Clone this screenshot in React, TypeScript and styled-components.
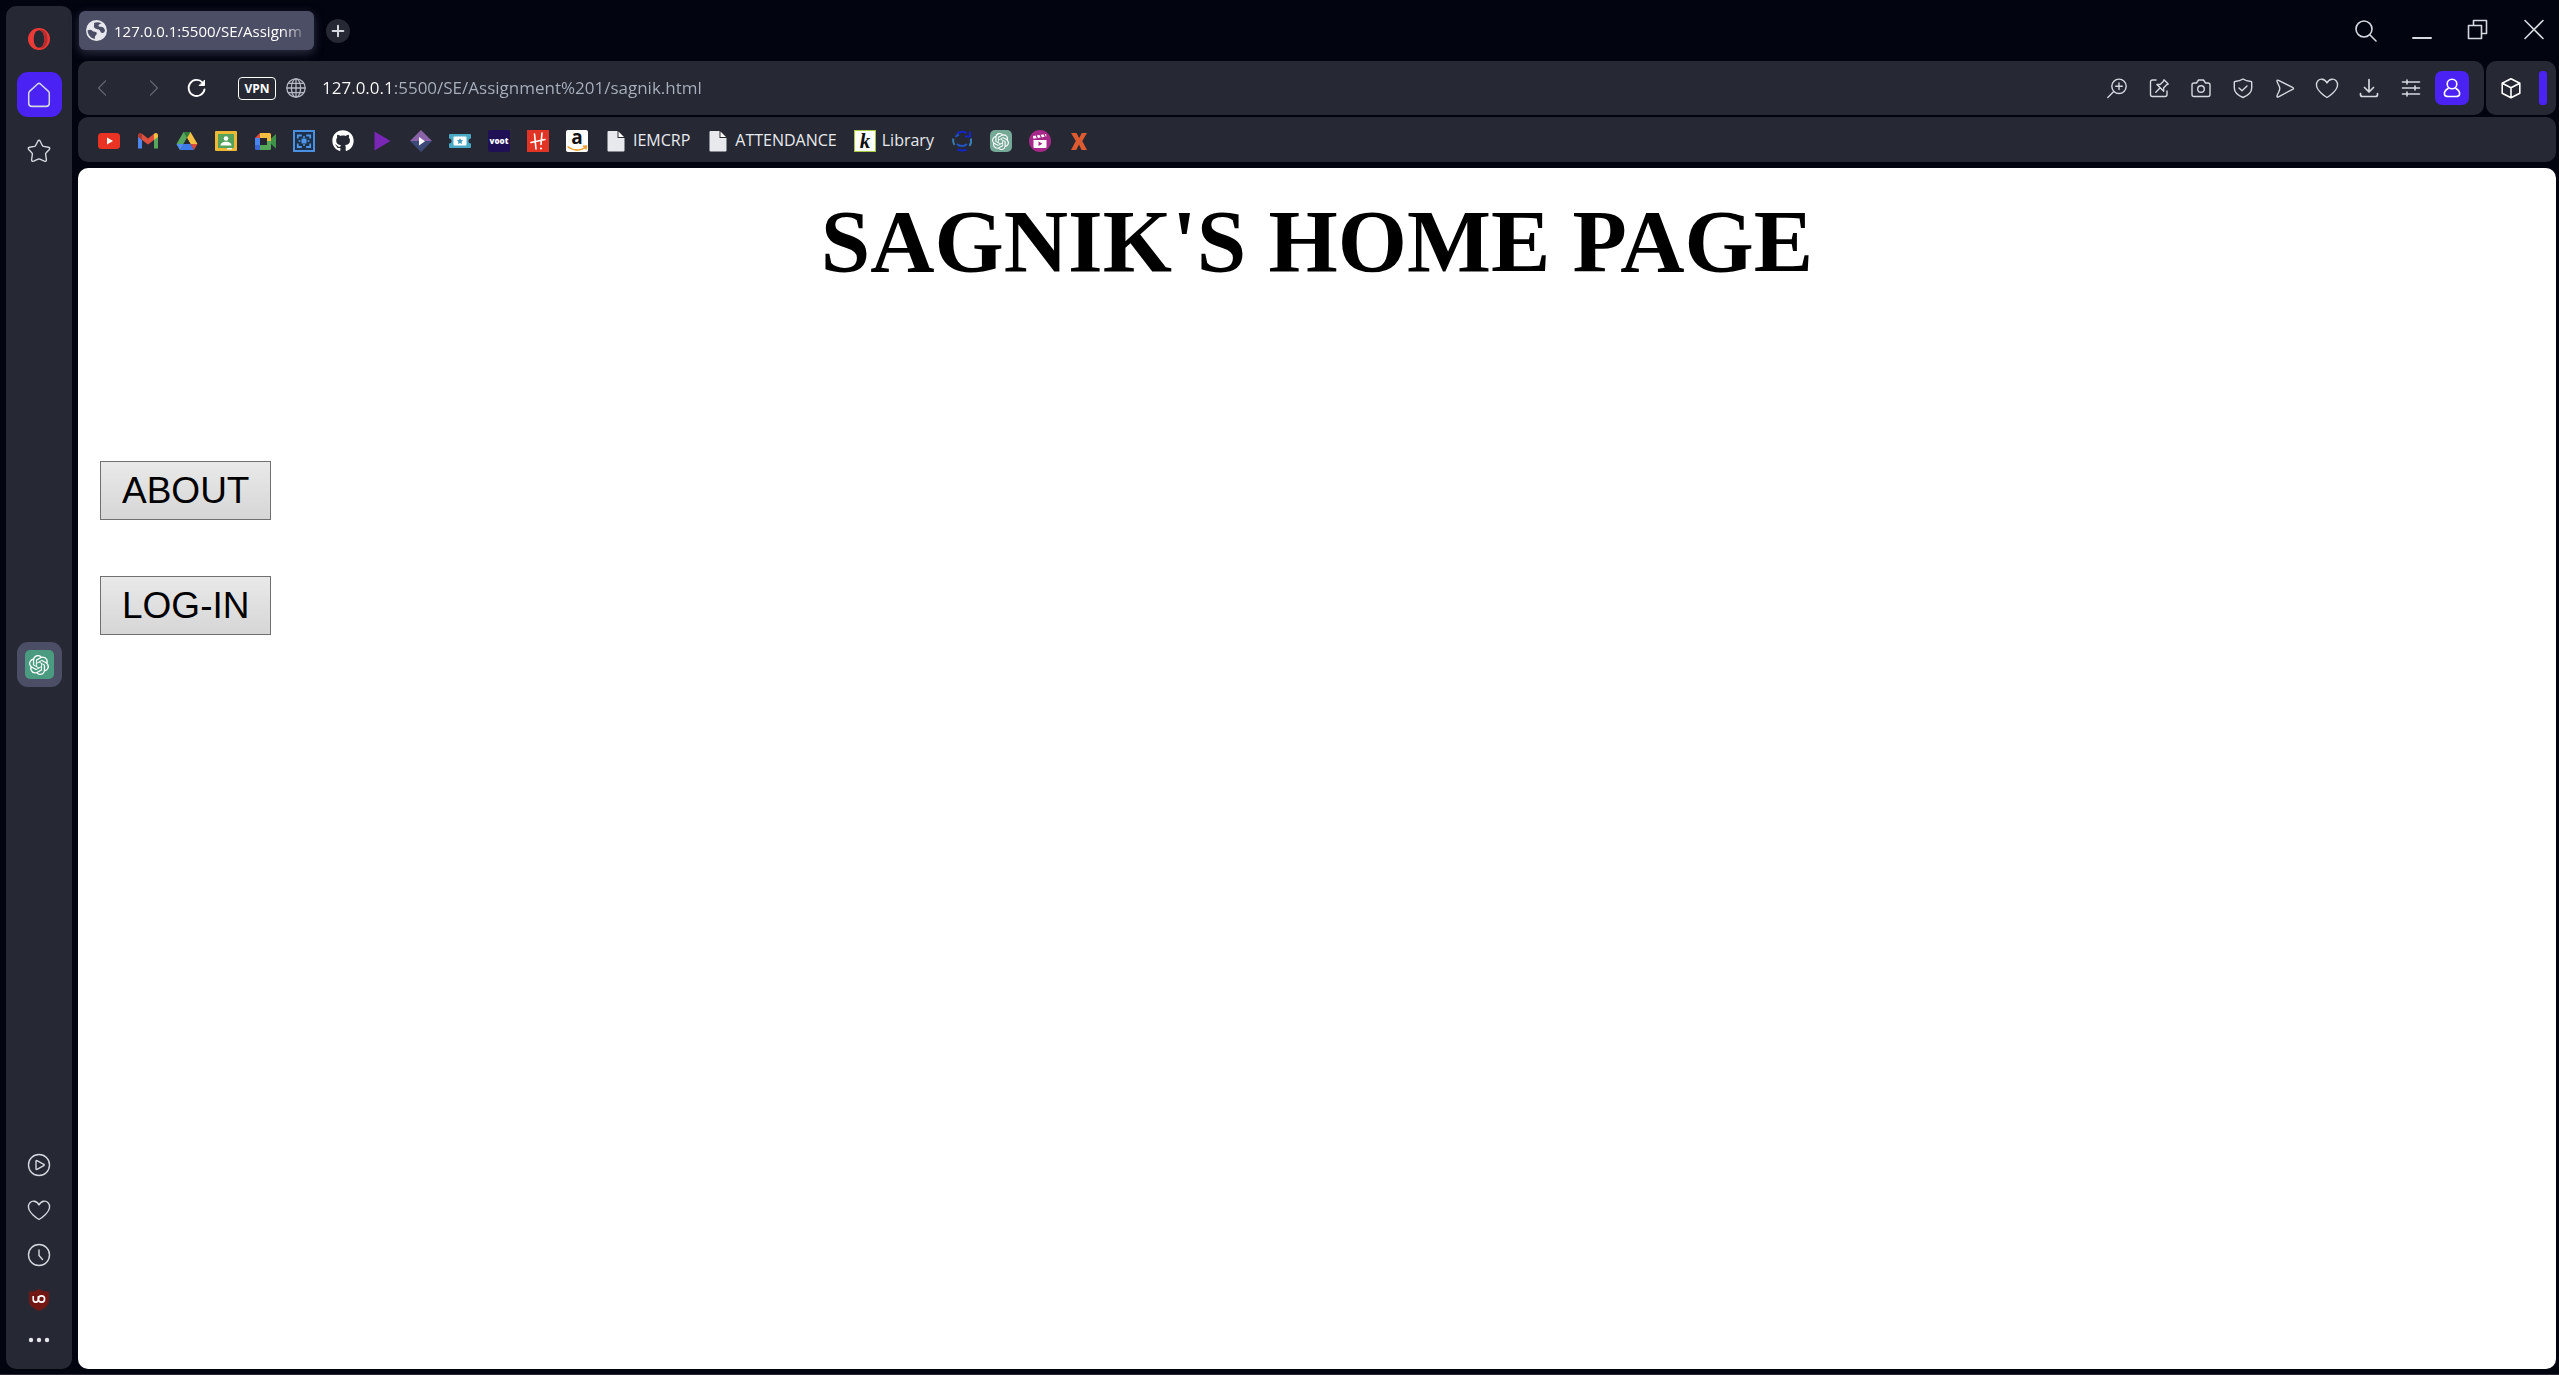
import React from "react";
import styled, { createGlobalStyle, css } from "styled-components";
import { FaGithub } from "react-icons/fa";
import { SiOpenai } from "react-icons/si";

const color = {
  frame: "#020410",
  panel: "#262834",
  active: "#4b4e65",
  accent: "#4a22f4",
  text: "#ffffff",
  muted: "#a9b1bf",
  icon: "#d5d8de",
};

const uiFont = '"Open Sans", "Noto Sans", sans-serif';

const GlobalStyle = createGlobalStyle`
  *, *::before, *::after { box-sizing: border-box; }
  body { margin: 0; background: ${color.frame}; }
  button, input { font: inherit; color: inherit; }
  svg { display: block; }
`;

const Frame = styled.div`
  display: flex;
  gap: 6px;
  height: 100vh;
  padding: 6px 3px 5px 6px;
  background: ${color.frame};
  border-bottom: 1px solid #2c2933;
  font-family: ${uiFont};
  color: ${color.text};
`;

const Sidebar = styled.aside`
  flex: none;
  width: 66px;
  padding: 10px 0 16px;
  display: flex;
  flex-direction: column;
  align-items: center;
  justify-content: space-between;
  background: ${color.panel};
  border-radius: 10px;
`;

const SideGroup = styled.div<{ $gap: number; $after?: number }>`
  display: flex;
  flex-direction: column;
  align-items: center;
  gap: ${(p) => p.$gap}px;
  padding-bottom: ${(p) => p.$after ?? 0}px;
`;

const plainButton = css`
  display: flex;
  align-items: center;
  justify-content: center;
  padding: 0;
  border: 0;
  background: none;
  color: ${color.icon};
  cursor: pointer;
`;

const SideButton = styled.button<{ $fill?: string; $height?: number }>`
  ${plainButton}
  width: 45px;
  height: ${(p) => p.$height ?? 45}px;
  border-radius: 11px;
  background: ${(p) => p.$fill ?? "transparent"};
`;

const GptTile = styled.span<{ $size: number; $fill: string }>`
  display: flex;
  align-items: center;
  justify-content: center;
  width: ${(p) => p.$size}px;
  height: ${(p) => p.$size}px;
  border-radius: 5px;
  background: ${(p) => p.$fill};
  color: #ffffff;
`;

const Main = styled.div`
  flex: 1;
  min-width: 0;
  display: flex;
  flex-direction: column;
`;

const TabStrip = styled.header`
  flex: none;
  display: flex;
  align-items: center;
  height: 55px;
  padding: 0 10px 6px 1px;
`;

const Tab = styled.button`
  display: flex;
  align-items: center;
  gap: 7px;
  width: 235px;
  height: 39px;
  padding: 0 6px 0 7px;
  border: 0;
  border-radius: 6px;
  background: ${color.active};
  box-shadow: 0 3px 10px rgba(75, 78, 101, 0.6);
  font-size: 15px;
  text-align: left;
`;

const TabTitle = styled.span`
  flex: 1;
  white-space: nowrap;
  mask-image: linear-gradient(to right, #000 168px, transparent 196px);
`;

const NewTab = styled.button`
  ${plainButton}
  width: 24px;
  height: 24px;
  margin-left: 12px;
  border-radius: 50%;
  background: ${color.panel};
`;

const WindowControls = styled.div`
  display: flex;
  gap: 32px;
  margin-left: auto;
  padding-bottom: 2px;
`;

const IconButton = styled.button<{ $tone?: string }>`
  ${plainButton}
  width: 24px;
  height: 24px;
  color: ${(p) => p.$tone ?? color.icon};
`;

const ToolRow = styled.div`
  flex: none;
  display: flex;
  gap: 2px;
  height: 54px;
`;

const AddressBar = styled.div`
  flex: 1;
  display: flex;
  align-items: center;
  padding: 0 15px 0 12px;
  background: ${color.panel};
  border-radius: 10px;
`;

const NavButtons = styled.div`
  display: flex;
  align-items: center;
  gap: 23px;
`;

const VpnButton = styled.button`
  ${plainButton}
  width: 38px;
  height: 23px;
  margin: 0 8px 0 30px;
  border: 1px solid #ffffff;
  border-radius: 4px;
  color: #ffffff;
  font-size: 12px;
  font-weight: 700;
`;

const UrlInput = styled.input`
  flex: 1;
  min-width: 0;
  margin-left: 14px;
  padding: 0;
  border: 0;
  outline: 0;
  color: ${color.muted};
  font-size: 17px;
  line-height: 24px;
  background: linear-gradient(to right, ${color.text} 72px, ${color.muted} 72px);
  background-clip: text;
  -webkit-background-clip: text;
  -webkit-text-fill-color: transparent;
`;

const Tools = styled.div`
  display: flex;
  align-items: center;
  gap: 18px;
`;

const ProfileButton = styled.button`
  ${plainButton}
  width: 34px;
  height: 34px;
  margin-left: -6px;
  border-radius: 7px;
  background: ${color.accent};
  color: #ffffff;
`;

const ExtensionBar = styled.div`
  display: flex;
  align-items: center;
  justify-content: space-between;
  width: 70px;
  padding: 0 9px 0 13px;
  background: ${color.panel};
  border-radius: 10px;
`;

const AccentPill = styled.span`
  width: 8px;
  height: 34px;
  border-radius: 3px;
  background: ${color.accent};
`;

const Bookmarks = styled.nav`
  flex: none;
  display: flex;
  align-items: center;
  gap: 17px;
  height: 45px;
  margin: 2px 0 6px;
  padding: 3px 20px 0;
  background: ${color.panel};
  border-radius: 10px;
`;

const Bookmark = styled.a`
  display: flex;
  align-items: center;
  gap: 6px;
  color: #e8eaee;
  font-size: 16px;
  line-height: 22px;
  text-decoration: none;
  white-space: nowrap;
`;

const BookmarkLabel = styled.span`
  padding-bottom: 2px;
`;

const Page = styled.main`
  flex: 1;
  padding: 21px 22px;
  background: #ffffff;
  border-radius: 10px;
  color: #000000;
`;

const Title = styled.h1`
  margin: 0 0 168px;
  font-family: "Liberation Serif", "Times New Roman", serif;
  font-size: 89px;
  font-weight: 700;
  line-height: 104px;
  text-align: center;
`;

const Actions = styled.div`
  display: flex;
  flex-direction: column;
  align-items: flex-start;
  gap: 56px;
`;

const PageButton = styled.button`
  height: 59px;
  padding: 0 21px;
  border: 1px solid #707070;
  background: linear-gradient(#e9e9e9, #d6d6d6);
  color: #000000;
  font-family: "Liberation Sans", Arial, sans-serif;
  font-size: 37px;
  line-height: 42px;
`;

type SvgProps = { children: React.ReactNode; size?: number; width?: number };

/* Outline icon on a 24-unit grid. */
const Line = ({ children, size = 24, width = 1.4 }: SvgProps) => (
  <svg width={size} height={size} viewBox="0 0 24 24" fill="none" stroke="currentColor"
    strokeWidth={width} strokeLinecap="round" strokeLinejoin="round" aria-hidden="true">
    {children}
  </svg>
);

/* Full-colour favicon on a 22-unit grid. */
const Favicon = ({ children }: SvgProps) => (
  <svg width={22} height={22} viewBox="0 0 22 22" aria-hidden="true">
    {children}
  </svg>
);

const HeartIcon = () => (
  <Line>
    <path d="M12 21.500C9.500 20.200 2.200 14.800 1.500 9.500 1 5.500 4 2.900 7 3.200c2.400.2 4.100 1.800 5 3.700.9-1.900 2.600-3.500 5-3.700 3-.3 6 2.300 5.500 6.300-.7 5.300-8 10.700-10.500 12z" />
  </Line>
);

const DocIcon = () => (
  <Favicon>
    <path d="M3.500 1h9v7h7v12.500a1 1 0 0 1-1 1h-15a1 1 0 0 1-1-1V2a1 1 0 0 1 1-1z" fill="#e8e9ec" />
    <path d="M13.500 1.500l5.500 5.500h-5.500z" fill="#ffffff" />
  </Favicon>
);

const YoutubeIcon = () => (
  <Favicon>
    <rect y="3" width="22" height="16" rx="3.500" fill="#ea3323" />
    <path d="M9 7.500l6 3.500-6 3.500z" fill="#fff" />
  </Favicon>
);

const GmailIcon = () => (
  <Favicon>
    <path d="M1 5v13.500h4V10z" fill="#4f86ec" />
    <path d="M21 5v13.500h-4V10z" fill="#57a65b" />
    <path d="M1 5.200C1 3 3.500 2.500 5 3.700V10L1 7z" fill="#b03a2e" />
    <path d="M21 5.200C21 3 18.500 2.500 17 3.700V10l4-3z" fill="#f2bf42" />
    <path d="M5 3.700l6 4.800 6-4.800V10l-6 4.500L5 10z" fill="#dd4f3f" />
  </Favicon>
);

const DriveIcon = () => (
  <Favicon>
    <path d="M7.500 2h7L11 8 4 20 .5 14z" fill="#57a65b" />
    <path d="M7.500 2h7l-3.500 6z" fill="#2f7d3b" />
    <path d="M14.500 2L21.500 14h-7L11 8z" fill="#f5bf41" />
    <path d="M7.500 14h7l3.500 6H4z" fill="#3f7be8" />
    <path d="M.5 14h7L4 20z" fill="#4f8cf5" />
    <path d="M11 8l3.500 6h-7z" fill={color.panel} />
    <path d="M14.500 14h7L18 20z" fill="#dc4b3d" />
  </Favicon>
);

const ClassroomIcon = () => (
  <Favicon>
    <rect y="1" width="22" height="20" rx="1" fill="#edb934" />
    <rect x="3" y="4" width="16" height="14" fill="#56a25b" />
    <circle cx="11" cy="8.500" r="2.300" fill="#fff" />
    <path d="M5.500 15.500c0-2.500 2.800-3.700 5.500-3.700s5.500 1.200 5.500 3.700z" fill="#fff" />
    <path d="M12 18h5v1.500h-5z" fill="#f5f5f5" />
  </Favicon>
);

const MeetIcon = () => (
  <Favicon>
    <path d="M1 8l5-5v5z" fill="#dc4b3d" />
    <path d="M6 3h9.500a1.500 1.500 0 0 1 1.500 1.500V11h-4V8H6z" fill="#f5bf41" />
    <path d="M1 8h5v7H1z" fill="#4a86f0" />
    <path d="M1 15h5v5H2.500A1.500 1.500 0 0 1 1 18.500z" fill="#3a66d6" />
    <path d="M6 15h7v-4h4v7.500a1.500 1.500 0 0 1-1.500 1.500H6z" fill="#55a85a" />
    <path d="M17 8.500L22 4v14.500l-5-4.500z" fill="#3d9148" />
  </Favicon>
);

const CaptureIcon = () => (
  <Favicon>
    <rect x="1" y="1" width="20" height="20" fill="#1f3049" stroke="#4a90e2" strokeWidth="2" />
    <path d="M4.800 8.500V5.500h4M13.200 5.500h4v3M17.200 13.500v3.500h-4M8.800 17h-4v-3.500" fill="none" stroke="#4f96ea" strokeWidth="1.800" />
    <rect x="8.500" y="8.500" width="5" height="5" fill="#4f96ea" />
    <path d="M11 6v2M11 14v2M5.500 11h2M14.500 11h2" stroke="#4f96ea" strokeWidth="1.500" />
  </Favicon>
);

const PlayIcon = () => (
  <Favicon>
    <path d="M3.500 1.500L19.500 11l-16 9.500z" fill="#7a27b8" />
  </Favicon>
);

const DiamondIcon = () => (
  <Favicon>
    <path d="M11 0L22 11H0z" fill="#8a63a8" />
    <path d="M0 11h22L11 22z" fill="#3d4a78" />
    <path d="M9 7l6 4.200-6 4.300z" fill="#fff" />
  </Favicon>
);

const TicketIcon = () => (
  <Favicon>
    <path d="M1 4h20a1 1 0 0 1 1 1v3.500a2.500 2.500 0 0 0 0 5V17a1 1 0 0 1-1 1H1a1 1 0 0 1-1-1v-3.500a2.500 2.500 0 0 0 0-5V5a1 1 0 0 1 1-1z" fill="#4aa9c4" />
    <rect x="4.500" y="6.500" width="13" height="9" rx="1" fill="#fff" />
    <path d="M11 8l1 1.900 2.200.4-1.600 1.500.4 2.200-2-1-2 1 .4-2.200-1.600-1.500 2.200-.4z" fill="#3a9ab8" />
  </Favicon>
);

const VootIcon = () => (
  <Favicon>
    <rect width="22" height="22" rx="2" fill="#1f0f55" />
    <text x="11" y="14" textAnchor="middle" fontFamily="Open Sans, sans-serif" fontWeight="800" fontSize="8" fill="#fff">voot</text>
  </Favicon>
);

const RedIcon = () => (
  <Favicon>
    <rect width="22" height="22" fill="#e23424" />
    <path d="M7.500 4l1.500 15M15 3l-1 11.500M4 12.500l14-3" stroke="#fff" strokeWidth="1.600" strokeLinecap="round" />
    <circle cx="14" cy="18.500" r="1.100" fill="#fff" />
  </Favicon>
);

const AmazonIcon = () => (
  <Favicon>
    <rect width="22" height="22" rx="2" fill="#fff" />
    <text x="11" y="14" textAnchor="middle" fontFamily="Open Sans, sans-serif" fontWeight="700" fontSize="19" fill="#111">a</text>
    <path d="M1.500 16.500c6 4.500 12.500 4.500 18 .8M17 16.200l3.500-.2-.7 3.500" fill="none" stroke="#f0a030" strokeWidth="1.500" />
  </Favicon>
);

const LibraryIcon = () => (
  <Favicon>
    <rect x=".5" y=".5" width="21" height="21" fill="#fff" stroke="#a5c93c" />
    <text x="11" y="18" textAnchor="middle" fontFamily="Liberation Serif, serif" fontStyle="italic" fontWeight="700" fontSize="21" fill="#111">k</text>
  </Favicon>
);

const RingIcon = () => (
  <Favicon>
    <g fill="none" strokeWidth="2">
      <path d="M6 3.500A9 9 0 0 1 15.500 3M19 1.500v5h-5M15.500 19.300a9 9 0 0 1-9 0" stroke="#1426c8" />
      <path d="M2.200 8.500a9 9 0 0 0 1.300 6.500M19.800 8.500A9 9 0 0 1 18.500 16" stroke="#3a7db0" />
      <path d="M4.500 7A7 7 0 0 1 8 4.500M6 14c2.500 2.800 7.500 2.800 10 0" stroke="#2155c5" />
    </g>
  </Favicon>
);

const MovieIcon = () => (
  <Favicon>
    <circle cx="11" cy="11" r="11" fill="#a8288a" />
    <path d="M4.500 10h13v7a1 1 0 0 1-1 1h-11a1 1 0 0 1-1-1zM4 6l13-2 .4 2.500-13 2.200z" fill="#fff" />
    <path d="M7 5l1.500 3.500M11 4.500L12.500 8M15 4l1.500 3.300" stroke="#a8288a" strokeWidth="1.200" />
    <path d="M9.500 11.500l4 2.300-4 2.300z" fill="#a8288a" />
  </Favicon>
);

const XIcon = () => (
  <Favicon>
    <path d="M3 3h5.500l2.700 5 2.500-5H19l-4.700 8L19 20h-5.500L11 14.500 8.300 20H3l4.800-9z" fill="#dc5b30" />
  </Favicon>
);

const bookmarks: { name: string; icon: React.ReactNode; label?: string }[] = [
  { name: "YouTube", icon: <YoutubeIcon /> },
  { name: "Gmail", icon: <GmailIcon /> },
  { name: "Drive", icon: <DriveIcon /> },
  { name: "Classroom", icon: <ClassroomIcon /> },
  { name: "Meet", icon: <MeetIcon /> },
  { name: "Capture", icon: <CaptureIcon /> },
  { name: "GitHub", icon: <FaGithub size={22} color="#fff" /> },
  { name: "Player", icon: <PlayIcon /> },
  { name: "Movies", icon: <DiamondIcon /> },
  { name: "Tickets", icon: <TicketIcon /> },
  { name: "Voot", icon: <VootIcon /> },
  { name: "Streaming", icon: <RedIcon /> },
  { name: "Amazon", icon: <AmazonIcon /> },
  { name: "IEMCRP", icon: <DocIcon />, label: "IEMCRP" },
  { name: "ATTENDANCE", icon: <DocIcon />, label: "ATTENDANCE" },
  { name: "Library", icon: <LibraryIcon />, label: "Library" },
  { name: "Converter", icon: <RingIcon /> },
  { name: "ChatGPT", icon: <GptTile $size={22} $fill="#75a896"><SiOpenai size={17} /></GptTile> },
  { name: "Films", icon: <MovieIcon /> },
  { name: "X", icon: <XIcon /> },
];

const tools: { name: string; icon: React.ReactNode }[] = [
  { name: "Zoom", icon: <Line><circle cx="14" cy="10.300" r="7.200" /><path d="M8.700 15.500L2.800 21.400M10.700 10.300h6.600M14 7v6.600" /></Line> },
  { name: "Easy setup", icon: <Line><path d="M9 4H5.500A2 2 0 0 0 3.500 6v12.500a2 2 0 0 0 2 2H18a2 2 0 0 0 2-2V15" /><path d="M17 3.800l4.200 4.200-1.600.8-3 3.200.1 3.200-6.800-6.800 3.200.1 3.200-3zM13.200 11.800L8.800 16.200" /></Line> },
  { name: "Snapshot", icon: <Line><path d="M5 7h2.500l2-3h5l2 3H19a2 2 0 0 1 2 2v9.500a2 2 0 0 1-2 2H5a2 2 0 0 1-2-2V9a2 2 0 0 1 2-2z" /><circle cx="12" cy="13" r="3.300" /></Line> },
  { name: "Privacy protection", icon: <Line><path d="M12 3c2.500 1.700 5 2.200 8 2.500.8 0 .7 1 .7 1.500v5c0 4-3.200 7.200-8.700 9.500-5.500-2.300-8.700-5.500-8.700-9.500V7c0-.5-.1-1.500.7-1.500 3-.3 5.500-.8 8-2.500z" /><path d="M8 12l3 2.800 5-4.800" /></Line> },
  { name: "Send", icon: <Line><path d="M5.500 4.300L20 11.700q1 .7 0 1.400L5.500 20.800q-2 .8-1.400-1.200c.7-2.500 2.700-4.500 2.700-7s-2-4.500-2.700-7q-.6-2 1.400-1.300z" /></Line> },
  { name: "Favorites", icon: <HeartIcon /> },
  { name: "Downloads", icon: <Line width={1.700}><path d="M12 3.500v12M7.500 11.500l4.500 4.500 4.500-4.500M3.500 17.500v1a2 2 0 0 0 2 2h13a2 2 0 0 0 2-2v-1" /></Line> },
  { name: "Page settings", icon: <Line width={1.600}><path d="M3.500 6h17M3.500 12h17M3.500 18h17M8 4v4M16 10v4M8 16v4" /></Line> },
];

export default function App() {
  return (
    <>
      <GlobalStyle />
      <Frame>
        <Sidebar>
          <SideGroup $gap={11} $after={9}>
            <SideButton aria-label="Opera">
              <svg width="24" height="24" viewBox="0 0 24 24" aria-hidden="true">
                <path fillRule="evenodd" fill="#ea3b36" d="M12 1a11 11 0 1 0 0 22 11 11 0 0 0 0-22zM12 3.200c3.300 0 5.200 4 5.200 8.800s-1.900 8.800-5.200 8.800S6.800 16.800 6.800 12 8.700 3.200 12 3.200z" />
                <path d="M12 3.200c3.300 0 5.200 4 5.200 8.800s-1.900 8.800-5.200 8.800c5 2 8.500-3 8.500-8.800S17 1.200 12 3.200z" fill="#b52c2f" />
              </svg>
            </SideButton>
            <SideButton aria-label="Home" $fill={color.accent}>
              <Line size={26}><path d="M2.500 10.500q0-1.200 1-2.100L10.700 1.800q1.300-1.100 2.600 0l7.200 6.600q1 .9 1 2.100V19.500a3 3 0 0 1-3 3h-13a3 3 0 0 1-3-3z" /></Line>
            </SideButton>
            <SideButton aria-label="Bookmarks">
              <Line><path d="M10.800 2.200q1.200-2 2.400 0l2.300 4.500q.3.600 1 .7l5 .8q2 .5.8 2.200l-3.300 3.500q-.5.500-.4 1.200l.8 5.500q.1 2.200-2 1.600l-4.600-2q-.8-.3-1.600 0l-4.600 2q-2.100.6-2-1.600l.8-5.500q.1-.7-.4-1.200L1.700 10.400q-1.200-1.700.8-2.200l5-.8q.7-.1 1-.7z" /></Line>
            </SideButton>
          </SideGroup>
          <SideButton aria-label="ChatGPT" $fill={color.active}>
            <GptTile $size={29} $fill="#4a9b80"><SiOpenai size={20} /></GptTile>
          </SideButton>
          <SideGroup $gap={9}>
            <SideButton $height={36} aria-label="Player">
              <Line><circle cx="12" cy="12" r="10.500" /><path d="M9 8.200q0-1 1-.6l6.800 3.700q.9.700 0 1.400L10 16.400q-1 .4-1-.6z" /></Line>
            </SideButton>
            <SideButton $height={36} aria-label="Pinboards"><HeartIcon /></SideButton>
            <SideButton $height={36} aria-label="History">
              <Line><circle cx="12" cy="12" r="10.500" /><path d="M12 7v5.500l3.500 4" /></Line>
            </SideButton>
            <SideButton $height={36} aria-label="Ad blocker">
              <svg width="22" height="24" viewBox="0 0 22 24" aria-hidden="true">
                <path d="M11 1c3 2 6 2.500 10 2.800V13c0 4.500-4.500 7.500-10 10-5.500-2.500-10-5.500-10-10V3.800C5 3.500 8 3 11 1z" fill="#721714" stroke="#4a2426" />
                <path d="M5.200 8v3.500a2.600 2.600 0 0 0 5.200 0V8" fill="none" stroke="#fff" strokeWidth="1.600" />
                <circle cx="13.500" cy="11" r="3.100" fill="none" stroke="#fff" strokeWidth="1.600" />
              </svg>
            </SideButton>
            <SideButton $height={26} aria-label="More">
              <svg width="24" height="6" viewBox="0 0 24 6" fill="#e4e6eb" aria-hidden="true">
                <circle cx="4" cy="3" r="2.200" /><circle cx="12" cy="3" r="2.200" /><circle cx="20" cy="3" r="2.200" />
              </svg>
            </SideButton>
          </SideGroup>
        </Sidebar>

        <Main>
          <TabStrip>
            <Tab>
              <svg width="21" height="21" viewBox="0 0 21 21" aria-hidden="true">
                <circle cx="10.500" cy="10.500" r="10.500" fill="#e6e8ee" />
                <path d="M1.500 10.500c2-1 4-.8 5 .5 1 1 3.500.3 4.200 1.800.6 1.700-1 2.200-1.700 3.700-.3.800-.2 1.500 0 2.500-4.500-.7-7-4.200-7.500-8.500zM8 3c2.500-1.300 5-1 7.500.3-1.500.5-3 1.200-3 2.400.3 1.200 2.200.8 3.700 1.300 1.500.3 2.300 1.800 2.800 3.300-.5 2.500-2 3.200-3.500 2.500-1.500-.8-1-2.600-2.700-3.200C11 9 9 9 8.200 7.600 7.500 6.300 8.500 4.500 8 3z" fill={color.active} />
              </svg>
              <TabTitle>127.0.0.1:5500/SE/Assignm</TabTitle>
            </Tab>
            <NewTab aria-label="New tab">
              <Line size={16} width={3}><path d="M12 4v16M4 12h16" /></Line>
            </NewTab>
            <WindowControls>
              <IconButton aria-label="Search tabs">
                <Line width={1.600}><circle cx="10" cy="11" r="8" /><path d="M16 17l6 6" /></Line>
              </IconButton>
              <IconButton aria-label="Minimize">
                <Line width={2}><path d="M3 20h18" /></Line>
              </IconButton>
              <IconButton aria-label="Restore">
                <Line width={1.600}><path d="M2.500 7.500h13v13h-13zM7.500 7.500v-5h13v13h-5" /></Line>
              </IconButton>
              <IconButton aria-label="Close">
                <Line width={1.600}><path d="M3 2.500l18 18M21 2.500l-18 18" /></Line>
              </IconButton>
            </WindowControls>
          </TabStrip>

          <ToolRow>
            <AddressBar>
              <NavButtons>
                <IconButton aria-label="Back" $tone="#60626d"><Line><path d="M15.500 5L8.500 12l7 7" /></Line></IconButton>
                <IconButton aria-label="Forward" $tone="#60626d"><Line><path d="M13.500 5l7 7-7 7" /></Line></IconButton>
                <IconButton aria-label="Reload" $tone="#ffffff">
                  <Line width={1.800}><path d="M20.500 13.500A8 8 0 1 1 18.500 6.500" /><path d="M20.500 4.500v5h-5z" fill="currentColor" strokeWidth="1" /></Line>
                </IconButton>
              </NavButtons>
              <VpnButton>VPN</VpnButton>
              <IconButton aria-label="Site information" $tone="#b4b9c4">
                <Line size={22}><circle cx="12" cy="12" r="10" /><ellipse cx="12" cy="12" rx="5" ry="10" /><path d="M12 2v20M2 12h20M3.500 7h17M3.500 17h17" /></Line>
              </IconButton>
              <UrlInput aria-label="Address" defaultValue="127.0.0.1:5500/SE/Assignment%201/sagnik.html" />
              <Tools>
                {tools.map((t) => (
                  <IconButton key={t.name} aria-label={t.name}>{t.icon}</IconButton>
                ))}
                <ProfileButton aria-label="Profile">
                  <Line width={1.600}><circle cx="12" cy="8" r="4.800" /><path d="M8 12.500C5 14.500 4 16.500 4.500 18.500 5 20.300 6.500 20.500 8 20.500h8c1.500 0 3-.2 3.500-2 .5-2-.5-4-3.500-6" /></Line>
                </ProfileButton>
              </Tools>
            </AddressBar>
            <ExtensionBar>
              <IconButton aria-label="Extensions" $tone="#ffffff">
                <Line width={1.600}><path d="M12 2.800l8.800 4.400v10L12 21.800l-8.800-4.600v-10zM3.200 7.200L12 11.800l8.800-4.600M12 11.800v10" /></Line>
              </IconButton>
              <AccentPill />
            </ExtensionBar>
          </ToolRow>

          <Bookmarks aria-label="Bookmarks">
            {bookmarks.map((b) => (
              <Bookmark key={b.name} href="#" aria-label={b.name}>
                {b.icon}
                {b.label && <BookmarkLabel>{b.label}</BookmarkLabel>}
              </Bookmark>
            ))}
          </Bookmarks>

          <Page>
            <Title>SAGNIK'S HOME PAGE</Title>
            <Actions>
              <PageButton>ABOUT</PageButton>
              <PageButton>LOG-IN</PageButton>
            </Actions>
          </Page>
        </Main>
      </Frame>
    </>
  );
}
